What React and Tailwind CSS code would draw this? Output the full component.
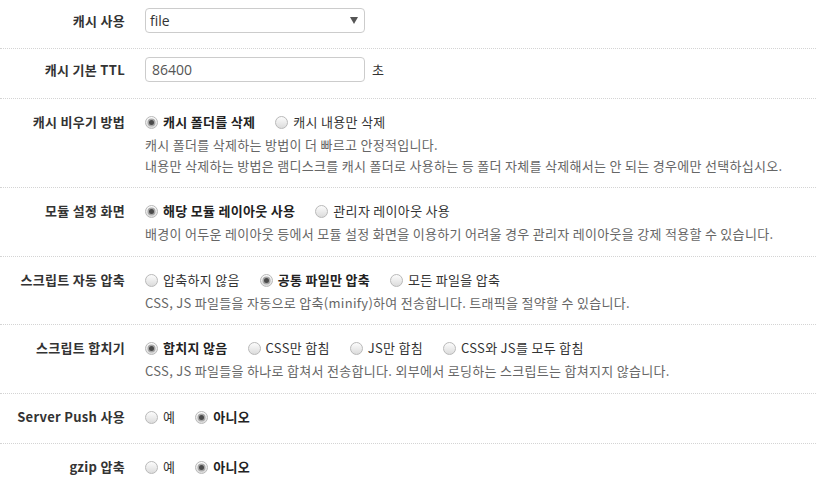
import React from 'react';

const rows = [
    {
        label: '캐시 비우기 방법',
        options: ['캐시 폴더를 삭제', '캐시 내용만 삭제'],
        checked: 0,
        pb: 'pb-[11px]',
        help: [
            '캐시 폴더를 삭제하는 방법이 더 빠르고 안정적입니다.',
            '내용만 삭제하는 방법은 램디스크를 캐시 폴더로 사용하는 등 폴더 자체를 삭제해서는 안 되는 경우에만 선택하십시오.',
        ],
    },
    {
        label: '모듈 설정 화면',
        options: ['해당 모듈 레이아웃 사용', '관리자 레이아웃 사용'],
        checked: 0,
        pb: 'pb-[12px]',
        help: ['배경이 어두운 레이아웃 등에서 모듈 설정 화면을 이용하기 어려울 경우 관리자 레이아웃을 강제 적용할 수 있습니다.'],
    },
    {
        label: '스크립트 자동 압축',
        options: ['압축하지 않음', '공통 파일만 압축', '모든 파일을 압축'],
        checked: 1,
        pb: 'pb-[11px]',
        help: ['CSS, JS 파일들을 자동으로 압축(minify)하여 전송합니다. 트래픽을 절약할 수 있습니다.'],
    },
    {
        label: '스크립트 합치기',
        options: ['합치지 않음', 'CSS만 합침', 'JS만 합침', 'CSS와 JS를 모두 합침'],
        checked: 0,
        pb: 'pb-[12px]',
        help: ['CSS, JS 파일들을 하나로 합쳐서 전송합니다. 외부에서 로딩하는 스크립트는 합쳐지지 않습니다.'],
    },
    { label: 'Server Push 사용', options: ['예', '아니오'], checked: 1, pb: 'pb-4', help: [] },
    { label: 'gzip 압축', options: ['예', '아니오'], checked: 1, pb: 'pb-4', help: [] },
];

const Radio = ({ on, text }) => (
    <label className="flex items-center mr-5">
        <span className="w-[13px] h-[13px] rounded-full border border-[#b9b9b9] bg-gradient-to-b from-[#fcfcfc] to-[#dcdcdc] flex items-center justify-center">
            {on && <span className="w-[5px] h-[5px] rounded-full bg-[#4a4a4a] shadow-[0_0_0_1.5px_#a8a8a8]"></span>}
        </span>
        <span className={`ml-[5px] ${on ? 'font-bold text-[#222]' : 'text-[#333]'}`}>{text}</span>
    </label>
);

const Label = ({ children, lh }) => (
    <div className={`w-[125px] shrink-0 text-right font-bold text-[#333] whitespace-nowrap ${lh}`}>{children}</div>
);

export default function App() {
    return (
        <div className="w-[816px] h-[490px] overflow-hidden bg-white text-[13px] tracking-[0.3px] font-['Noto_Sans_CJK_KR',sans-serif]">
            <div className="flex pt-2 pb-[15px]">
                <Label lh="leading-[25px]">캐시 사용</Label>
                <div className="ml-5 w-[220px] h-[25px] border border-[#ccc] rounded-[4px] flex items-center justify-between pl-[4px] pr-[6px] text-[14px] tracking-normal text-[#333] font-['Open_Sans',sans-serif]">
                    <span>file</span>
                    <svg width="8" height="7" viewBox="0 0 8 7"><path d="M0 0h8L4 7z" fill="#555" /></svg>
                </div>
            </div>

            <div className="flex border-t border-dotted border-[#d4d4d4] pt-2 pb-4">
                <Label lh="leading-[25px]">캐시 기본 TTL</Label>
                <div className="ml-5 flex items-center">
                    <div className="w-[220px] h-[25px] border border-[#ccc] rounded-[4px] flex items-center px-[6px] text-[14px] tracking-normal text-[#555] font-['Open_Sans',sans-serif]">
                        86400
                    </div>
                    <span className="ml-[7px] text-[#333]">초</span>
                </div>
            </div>

            {rows.map(row => (
                <div key={row.label} className={`flex border-t border-dotted border-[#d4d4d4] pt-[13px] ${row.pb}`}>
                    <Label lh="leading-5">{row.label}</Label>
                    <div className="ml-5">
                        <div className="flex h-5 items-center">
                            {row.options.map((opt, i) => (
                                <Radio key={opt} on={i === row.checked} text={opt} />
                            ))}
                        </div>
                        {row.help.length > 0 && (
                            <div className="mt-[2px] text-[#666] leading-[21px] whitespace-nowrap">
                                {row.help.map(line => (
                                    <p key={line}>{line}</p>
                                ))}
                            </div>
                        )}
                    </div>
                </div>
            ))}
        </div>
    );
}
